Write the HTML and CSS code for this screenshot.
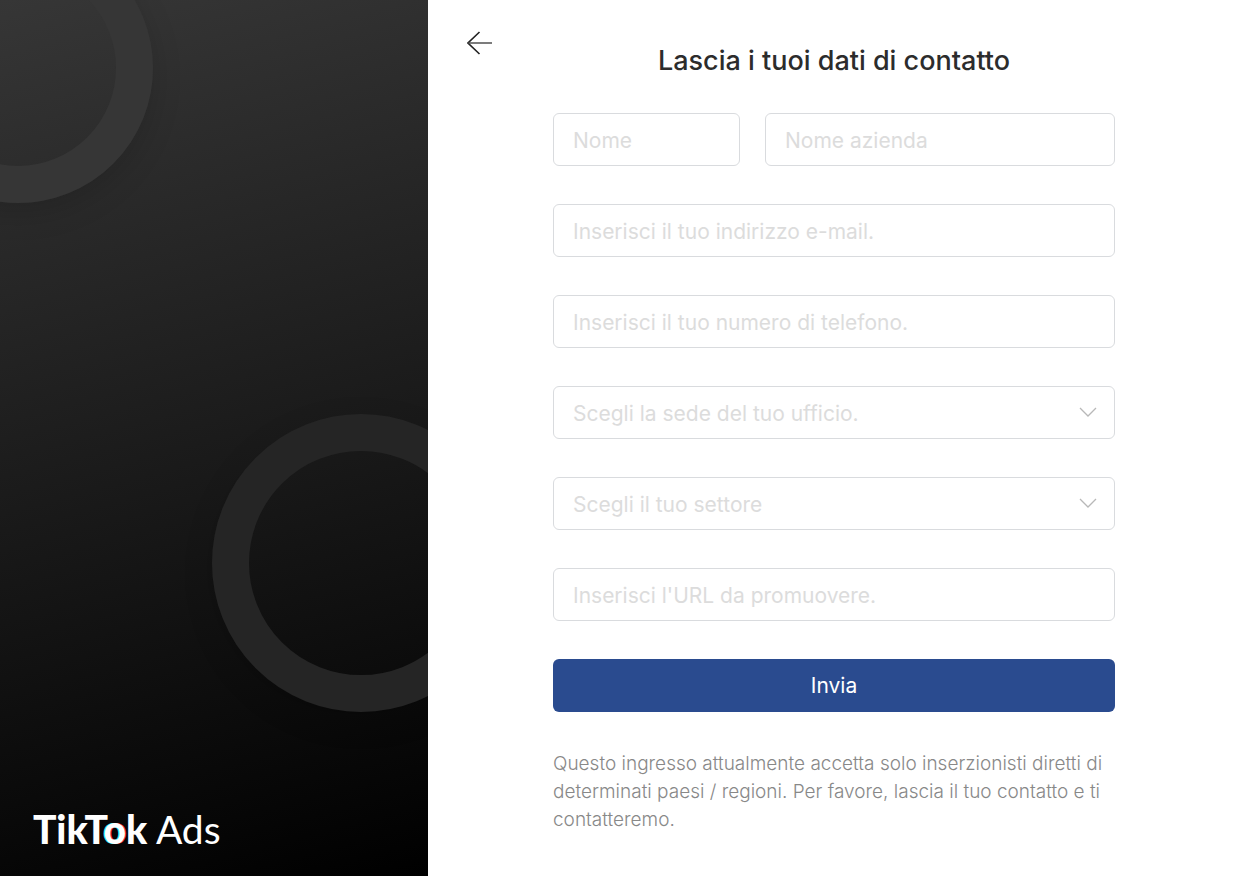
FILE: index.html
```html
<!doctype html>
<html lang="it">
<head>
	<meta charset="UTF-8">
	<meta name="viewport" content="width=device-width, initial-scale=1">
	<title>TikTok Ads</title>
	<link rel="stylesheet" href="styles.css">
</head>
<body>
	<div class="page">
		<div class="side">
			<span class="ring ring-top"></span>
			<span class="ring ring-bottom"></span>
			<div class="logo"><b>TikT<i>o</i>k</b> Ads</div>
		</div>
		<div class="main">
			<button type="button" class="back" aria-label="Indietro">
				<svg width="26" height="24" viewBox="0 0 26 24" fill="none" stroke="#222" stroke-width="1.6">
					<path d="M12.5 1L1 12L12.5 23"/>
					<path d="M1 12H25" stroke="#444" stroke-width="1.4"/>
				</svg>
			</button>
			<form class="form">
				<h1>Lascia i tuoi dati di contatto</h1>
				<div class="row">
					<input type="text" class="name" placeholder="Nome" aria-label="Nome">
					<input type="text" class="company" placeholder="Nome azienda" aria-label="Nome azienda">
				</div>
				<input type="email" placeholder="Inserisci il tuo indirizzo e-mail." aria-label="E-mail">
				<input type="tel" placeholder="Inserisci il tuo numero di telefono." aria-label="Telefono">
				<div class="select">
					<select aria-label="Sede">
						<option>Scegli la sede del tuo ufficio.</option>
					</select>
					<svg width="18" height="10" viewBox="0 0 18 10" fill="none" stroke="#b8b8b8" stroke-width="1.3"><path d="M1 1L9 9L17 1"/></svg>
				</div>
				<div class="select">
					<select aria-label="Settore">
						<option>Scegli il tuo settore</option>
					</select>
					<svg width="18" height="10" viewBox="0 0 18 10" fill="none" stroke="#b8b8b8" stroke-width="1.3"><path d="M1 1L9 9L17 1"/></svg>
				</div>
				<input type="url" placeholder="Inserisci l'URL da promuovere." aria-label="URL">
				<button type="submit" class="submit">Invia</button>
				<p>Questo ingresso attualmente accetta solo inserzionisti diretti di determinati paesi / regioni. Per favore, lascia il tuo contatto e ti contatteremo.</p>
			</form>
		</div>
	</div>
</body>
</html>
```
FILE: styles.css
```css
*{
	margin: 0;
	padding: 0;
	box-sizing: border-box;
}
body{
	font-family: Inter, "Liberation Sans", sans-serif;
	background: #fff;
}
.page{
	display: flex;
	min-height: 100vh;
}
/* left panel */
.side{
	flex: 0 0 428px;
	position: relative;
	overflow: hidden;
	display: flex;
	align-items: flex-end;
	padding: 0 33px 25px;
	background: linear-gradient(165deg, #363636, #000);
}
.ring{
	position: absolute;
	border-radius: 50%;
	box-shadow: 0 10px 30px rgba(0,0,0,0.15);
}
.ring-top{
	width: 270px;
	height: 270px;
	top: -67px;
	left: -117px;
	border: 37px solid #363636;
}
.ring-bottom{
	width: 298px;
	height: 298px;
	right: -82px;
	bottom: 164px;
	border: 37px solid #252525;
}
.logo{
	position: relative;
	font: 400 39px/44px Lato, sans-serif;
	color: #fff;
}
.logo b{
	font-weight: 900;
}
.logo i{
	font-style: normal;
	text-shadow: -1px 0 #25f4ee, 1px 0 #fe2c55;
}
/* right side */
.main{
	flex: 1;
	display: flex;
	align-items: flex-start;
	padding: 31px 118px 31px 39px;
}
.back{
	flex: 0 0 26px;
	height: 24px;
	margin-right: 60px;
	border: 0;
	background: none;
	cursor: pointer;
}
.back svg{
	display: block;
}
.form{
	flex: 1;
	min-width: 0;
	display: flex;
	flex-direction: column;
	gap: 38px;
}
h1{
	font-size: 27px;
	font-weight: 500;
	line-height: 44px;
	height: 44px;
	text-align: center;
	color: #2c2c2c;
	padding-top: 8px;
}
.row{
	display: flex;
	gap: 25px;
}
input,select,.submit{
	width: 100%;
	height: 53px;
	border: 1px solid #d9dbde;
	border-radius: 6px;
	padding: 2px 19px 0;
	font-family: inherit;
	font-size: 21px;
	font-weight: 400;
	background: #fff;
}
input::placeholder{
	color: #dcdcdc;
	opacity: 1;
}
.name{
	flex: 1;
	min-width: 0;
}
.company{
	flex: 0 0 350px;
}
.select{
	position: relative;
}
.select select{
	display: block;
	appearance: none;
	color: #dcdcdc;
}
.select svg{
	position: absolute;
	right: 18px;
	top: 21px;
	pointer-events: none;
}
.submit{
	border: 0;
	padding: 0;
	background: #2a4b8f;
	color: #fff;
	cursor: pointer;
}
.form p{
	font-size: 19px;
	font-weight: 300;
	line-height: 28px;
	color: #888;
}
```
